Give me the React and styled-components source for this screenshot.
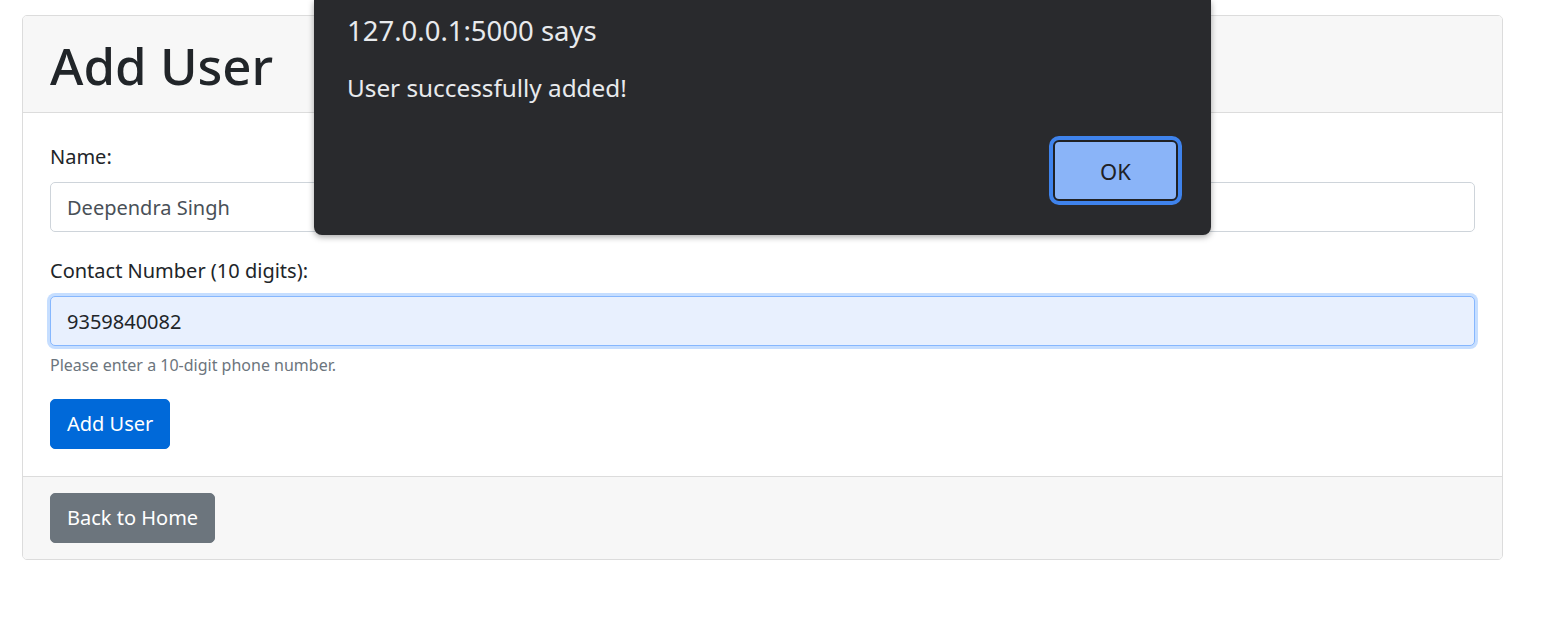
import React from "react";
import styled, { createGlobalStyle } from "styled-components";

const Global = createGlobalStyle`
  html, body { margin: 0; padding: 0; background: #fff; }
  body { font-family: "Noto Sans", "Open Sans", sans-serif; color: #212529; }
  * { box-sizing: border-box; }
`;

const Page = styled.div`
  padding: 15px 0 0 22px;
  width: 1562px;
  height: 626px;
  position: relative;
  overflow: hidden;
`;

const Card = styled.div`
  width: 1481px;
  border: 1px solid #dcdcdc;
  border-radius: 5px;
  overflow: hidden;
  background: #fff;
`;

const CardHeader = styled.div`
  background: #f7f7f7;
  border-bottom: 1px solid #dcdcdc;
  padding: 15px 27px 13px;
`;

const Title = styled.h1`
  margin: 0;
  font-size: 51px;
  line-height: 68px;
  font-weight: 500;
  color: #212529;
`;

const CardBody = styled.form`
  padding: 29px 27px 27px;
  display: flex;
  flex-direction: column;
`;

const Field = styled.div`
  display: flex;
  flex-direction: column;
  margin-bottom: ${(p) => p.$mb || 0}px;
`;

const Label = styled.label`
  font-size: 20px;
  line-height: 30px;
  margin-bottom: 10px;
  color: #212529;
`;

const Input = styled.input`
  height: 50px;
  width: 100%;
  border: 1px solid ${(p) => (p.$focused ? "#86b7fe" : "#ced4da")};
  border-radius: 5px;
  padding: 9px 16px;
  font-family: inherit;
  font-size: 20px;
  line-height: 30px;
  color: ${(p) => (p.$focused ? "#212529" : "#495057")};
  background: ${(p) => (p.$focused ? "#e8f0fe" : "#fff")};
  box-shadow: ${(p) => (p.$focused ? "0 0 0 3px #c6deff" : "none")};
  outline: none;
`;

const Help = styled.small`
  display: block;
  margin-top: 7px;
  font-size: 16px;
  line-height: 24px;
  color: #6c757d;
`;

const Button = styled.button`
  align-self: flex-start;
  height: 50px;
  padding: 9px 16px;
  border: 1px solid ${(p) => (p.$variant === "secondary" ? "#6c757d" : "#0069d9")};
  background: ${(p) => (p.$variant === "secondary" ? "#6c757d" : "#0069d9")};
  color: #fff;
  font-family: inherit;
  font-size: 20px;
  line-height: 30px;
  border-radius: 5px;
  margin-top: ${(p) => p.$mt || 0}px;
  cursor: pointer;
`;

const CardFooter = styled.div`
  background: #f7f7f7;
  border-top: 1px solid #dcdcdc;
  padding: 16px 27px;
  display: flex;
`;

const Dialog = styled.div`
  position: absolute;
  left: 314px;
  top: 0;
  width: 897px;
  height: 235px;
  background: #292a2d;
  border-radius: 0 0 8px 8px;
  box-shadow: 0 2px 6px rgba(0, 0, 0, 0.35);
  padding: 11px 33px 0 33px;
  display: flex;
  flex-direction: column;
  color: #e8eaed;
`;

const DialogTitle = styled.div`
  font-size: 27.5px;
  line-height: 40px;
`;

const DialogMessage = styled.div`
  font-size: 24.3px;
  line-height: 36px;
  margin-top: 19px;
`;

const DialogActions = styled.div`
  display: flex;
  justify-content: flex-end;
  margin-top: 34px;
`;

const OkButton = styled.button`
  width: 125px;
  height: 61px;
  border: 2px solid #202124;
  border-radius: 6px;
  background: #8ab4f8;
  color: #202124;
  font-family: inherit;
  font-size: 22px;
  box-shadow: 0 0 0 4px #3f83ec;
  outline: none;
`;

export default function App() {
  return (
    <>
      <Global />
      <Page>
        <Card>
          <CardHeader>
            <Title>Add User</Title>
          </CardHeader>
          <CardBody onSubmit={(e) => e.preventDefault()}>
            <Field $mb={24}>
              <Label>Name:</Label>
              <Input defaultValue="Deependra Singh" />
            </Field>
            <Field>
              <Label>Contact Number (10 digits):</Label>
              <Input $focused defaultValue="9359840082" />
              <Help>Please enter a 10-digit phone number.</Help>
            </Field>
            <Button $mt={22}>Add User</Button>
          </CardBody>
          <CardFooter>
            <Button $variant="secondary">Back to Home</Button>
          </CardFooter>
        </Card>
        <Dialog>
          <DialogTitle>127.0.0.1:5000 says</DialogTitle>
          <DialogMessage>User successfully added!</DialogMessage>
          <DialogActions>
            <OkButton>OK</OkButton>
          </DialogActions>
        </Dialog>
      </Page>
    </>
  );
}
